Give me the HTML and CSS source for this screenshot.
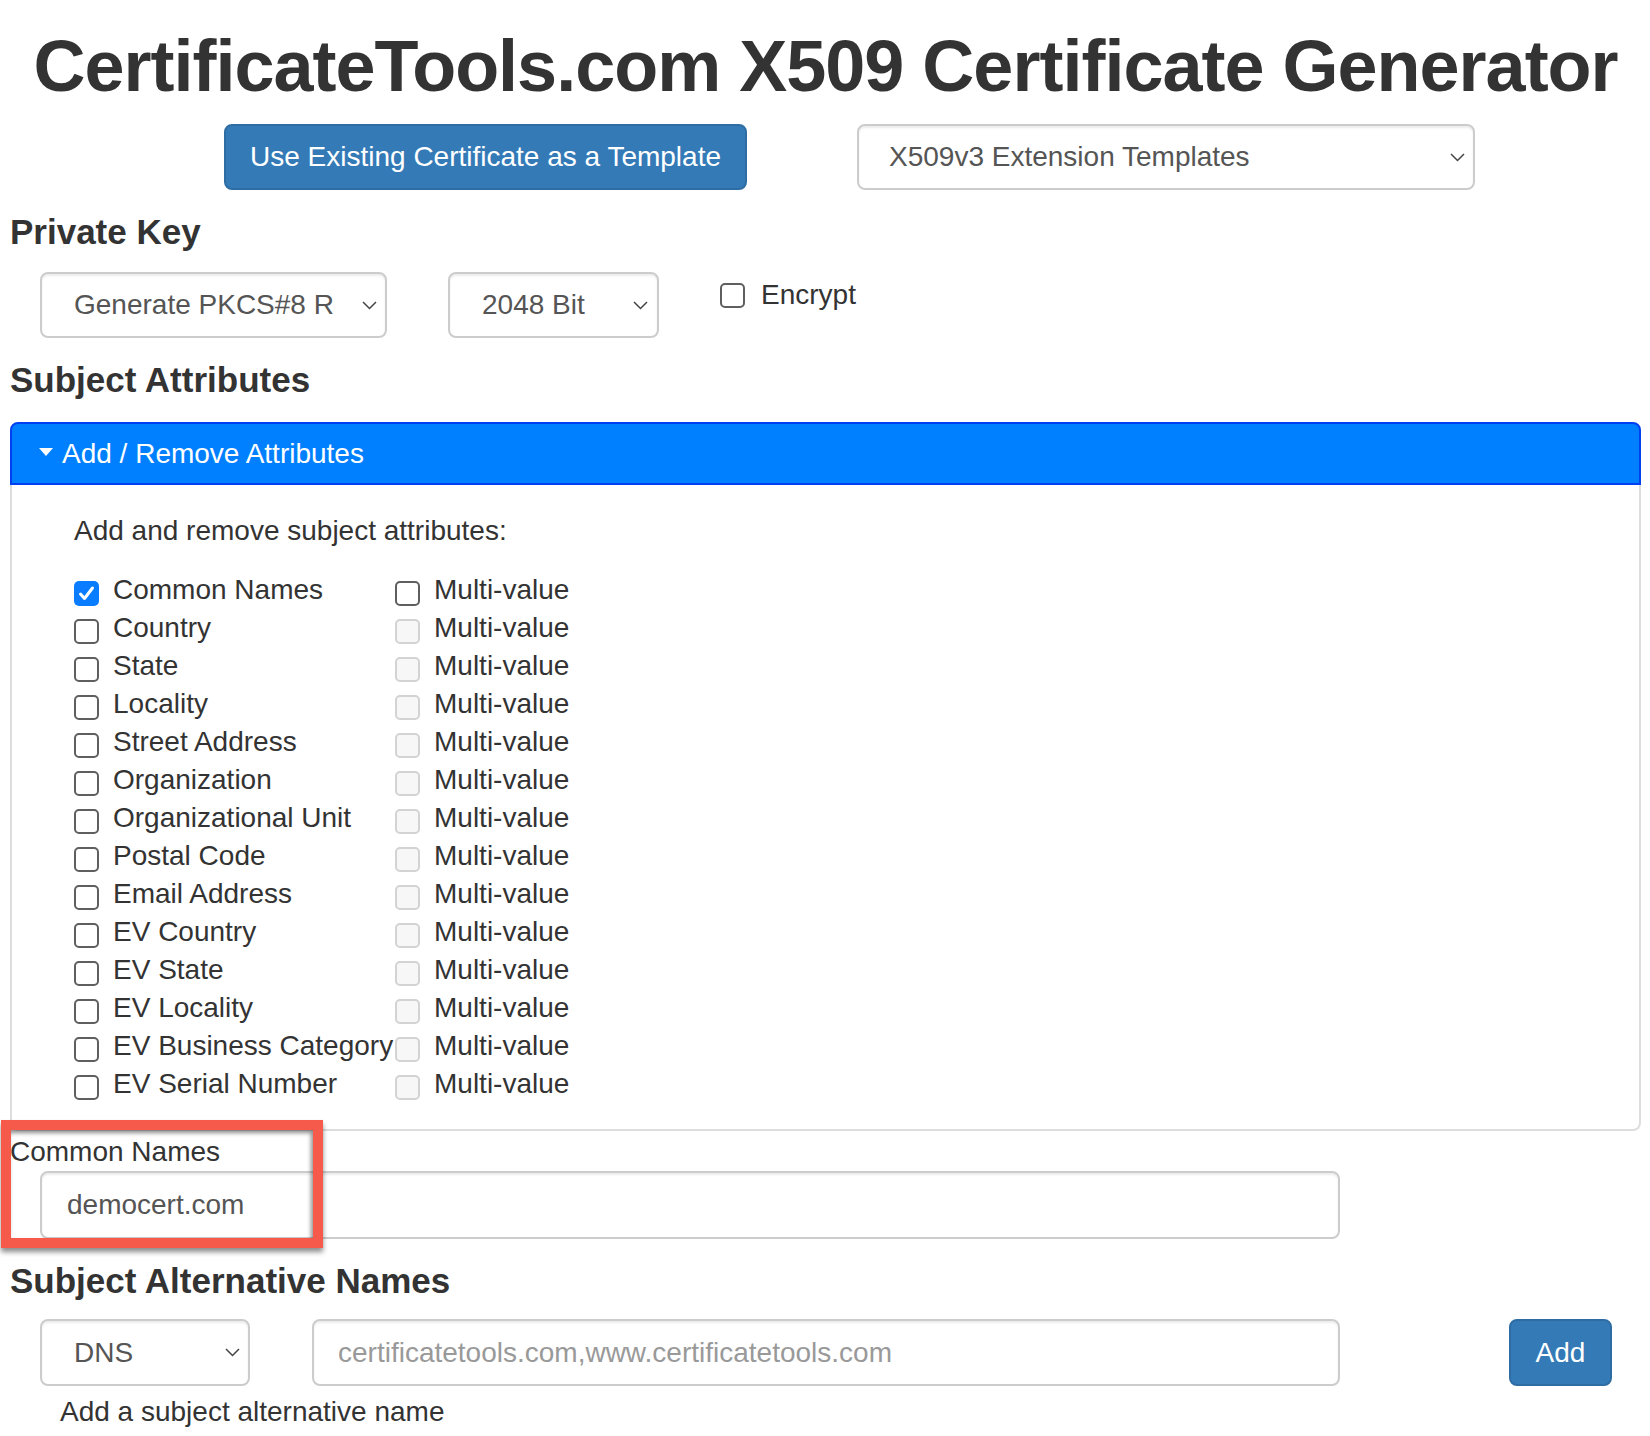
FILE: index.html
```html
<!DOCTYPE html>
<html lang="en">
<head>
<meta charset="utf-8">
<title>CertificateTools.com X509 Certificate Generator</title>
<link rel="stylesheet" href="styles.css">
</head>
<body>
<div class="page">
  <h1 class="title">CertificateTools.com X509 Certificate Generator</h1>

  <div class="toolbar">
    <button class="btn btn-template" type="button">Use Existing Certificate as a Template</button>
    <div class="select select-ext">
      <span>X509v3 Extension Templates</span>
      <svg class="chev" width="15" height="9" viewBox="0 0 15 9"><path d="M1 1l6.5 6.5L14 1" fill="none" stroke="#444" stroke-width="1.5"/></svg>
    </div>
  </div>

  <h3 class="section">Private Key</h3>
  <div class="key-row">
    <div class="select select-keytype">
      <span>Generate PKCS#8 R</span>
      <svg class="chev" width="15" height="9" viewBox="0 0 15 9"><path d="M1 1l6.5 6.5L14 1" fill="none" stroke="#444" stroke-width="1.5"/></svg>
    </div>
    <div class="select select-bits">
      <span>2048 Bit</span>
      <svg class="chev" width="15" height="9" viewBox="0 0 15 9"><path d="M1 1l6.5 6.5L14 1" fill="none" stroke="#444" stroke-width="1.5"/></svg>
    </div>
    <label class="encrypt"><span class="cb"></span><span>Encrypt</span></label>
  </div>

  <h3 class="section section-attr">Subject Attributes</h3>
  <div class="panel">
    <div class="panel-head"><span class="caret"></span><span>Add / Remove Attributes</span></div>
    <div class="panel-body">
      <p class="hint">Add and remove subject attributes:</p>
      <div class="attr-grid">
        <label class="attr"><span class="cb cb-on"><svg width="25" height="25" viewBox="0 0 25 25"><path d="M6.5 13l4 4.5L18.5 7" fill="none" stroke="#fff" stroke-width="3" stroke-linecap="round" stroke-linejoin="round"/></svg></span><span>Common Names</span></label>
        <label class="attr"><span class="cb"></span><span>Multi-value</span></label>
        <label class="attr"><span class="cb"></span><span>Country</span></label>
        <label class="attr"><span class="cb cb-off"></span><span>Multi-value</span></label>
        <label class="attr"><span class="cb"></span><span>State</span></label>
        <label class="attr"><span class="cb cb-off"></span><span>Multi-value</span></label>
        <label class="attr"><span class="cb"></span><span>Locality</span></label>
        <label class="attr"><span class="cb cb-off"></span><span>Multi-value</span></label>
        <label class="attr"><span class="cb"></span><span>Street Address</span></label>
        <label class="attr"><span class="cb cb-off"></span><span>Multi-value</span></label>
        <label class="attr"><span class="cb"></span><span>Organization</span></label>
        <label class="attr"><span class="cb cb-off"></span><span>Multi-value</span></label>
        <label class="attr"><span class="cb"></span><span>Organizational Unit</span></label>
        <label class="attr"><span class="cb cb-off"></span><span>Multi-value</span></label>
        <label class="attr"><span class="cb"></span><span>Postal Code</span></label>
        <label class="attr"><span class="cb cb-off"></span><span>Multi-value</span></label>
        <label class="attr"><span class="cb"></span><span>Email Address</span></label>
        <label class="attr"><span class="cb cb-off"></span><span>Multi-value</span></label>
        <label class="attr"><span class="cb"></span><span>EV Country</span></label>
        <label class="attr"><span class="cb cb-off"></span><span>Multi-value</span></label>
        <label class="attr"><span class="cb"></span><span>EV State</span></label>
        <label class="attr"><span class="cb cb-off"></span><span>Multi-value</span></label>
        <label class="attr"><span class="cb"></span><span>EV Locality</span></label>
        <label class="attr"><span class="cb cb-off"></span><span>Multi-value</span></label>
        <label class="attr"><span class="cb"></span><span>EV Business Category</span></label>
        <label class="attr"><span class="cb cb-off"></span><span>Multi-value</span></label>
        <label class="attr"><span class="cb"></span><span>EV Serial Number</span></label>
        <label class="attr"><span class="cb cb-off"></span><span>Multi-value</span></label>
      </div>
    </div>
  </div>

  <div class="cn-group">
    <div class="cn-label">Common Names</div>
    <input class="input input-cn" type="text" value="democert.com">
    <div class="highlight"></div>
  </div>

  <h3 class="section section-san">Subject Alternative Names</h3>
  <div class="san-row">
    <div class="select select-dns">
      <span>DNS</span>
      <svg class="chev" width="15" height="9" viewBox="0 0 15 9"><path d="M1 1l6.5 6.5L14 1" fill="none" stroke="#444" stroke-width="1.5"/></svg>
    </div>
    <input class="input input-san" type="text" placeholder="certificatetools.com,www.certificatetools.com">
    <button class="btn btn-add" type="button">Add</button>
  </div>
  <div class="help">Add a subject alternative name</div>
</div>
</body>
</html>
```
FILE: styles.css
```css
* {
  box-sizing: border-box;
}

body {
  margin: 0;
  background: #fff;
  color: #333;
  font-family: "Liberation Sans", Arial, Helvetica, sans-serif;
  font-size: 28px;
  line-height: 38px;
}

.page {
  padding: 0 9px 0 10px;
}

.title {
  margin: 26px 0 0;
  font-size: 72px;
  line-height: 80px;
  font-weight: bold;
  letter-spacing: -1px;
  text-align: center;
  color: #333;
}

.toolbar {
  display: flex;
  gap: 110px;
  margin-top: 18px;
  padding-left: 214px;
}

.btn {
  background: #337ab7;
  border: 2px solid #2e6da4;
  border-radius: 8px;
  color: #fff;
  font-family: inherit;
  font-size: 28px;
  padding: 0;
  cursor: pointer;
}

.btn-template {
  width: 523px;
  height: 66px;
}

.select {
  display: flex;
  align-items: center;
  justify-content: space-between;
  height: 66px;
  border: 2px solid #ccc;
  border-radius: 8px;
  background: #fff;
  color: #555;
  box-shadow: inset 0 2px 2px rgba(0, 0, 0, 0.075);
  white-space: nowrap;
}

.chev {
  flex: none;
}

.select-ext {
  width: 618px;
  padding: 0 8px 0 30px;
}

.section {
  margin: 22px 0 20px;
  font-size: 35px;
  line-height: 40px;
  font-weight: bold;
  color: #333;
}

.section-attr {
  margin-bottom: 22px;
}

.section-san {
  margin-bottom: 18px;
}

.key-row {
  display: flex;
  align-items: flex-start;
  padding-left: 30px;
  height: 66px;
}

.select-keytype {
  width: 347px;
  padding: 0 8px 0 32px;
}

.select-bits {
  width: 211px;
  margin-left: 61px;
  padding: 0 9px 0 32px;
}

.encrypt {
  display: flex;
  align-items: center;
  gap: 16px;
  margin: 4px 0 0 61px;
  height: 38px;
  color: #333;
}

.cb {
  flex: none;
  display: block;
  width: 25px;
  height: 25px;
  border: 2px solid #5f5f5f;
  border-radius: 5px;
  background: #fff;
}

.cb-on {
  border: none;
  background: #0a7cff;
}

.cb-on svg {
  display: block;
}

.cb-off {
  border-color: #d3d3d3;
  background: #f7f7f7;
}

.panel-head {
  display: flex;
  align-items: center;
  height: 63px;
  padding-left: 27px;
  background: #007fff;
  border: 2px solid #0040f0;
  border-radius: 8px 8px 0 0;
  color: #fff;
  line-height: 59px;
}

.caret {
  width: 0;
  height: 0;
  margin-right: 9px;
  margin-top: -3px;
  border-left: 7.5px solid transparent;
  border-right: 7.5px solid transparent;
  border-top: 8px solid #fff;
}

.panel-body {
  padding: 27px 0 26px 62px;
  border: 2px solid #ddd;
  border-top: none;
  border-radius: 0 0 8px 8px;
}

.hint {
  margin: 0 0 21px;
}

.attr-grid {
  display: grid;
  grid-template-columns: 321px 1fr;
}

.attr {
  display: flex;
  align-items: flex-start;
  height: 38px;
  white-space: nowrap;
}

.attr .cb {
  margin: 10px 14px 0 0;
}

.cn-group {
  position: relative;
  margin-top: 2px;
}

.cn-label {
  line-height: 38px;
  color: #333;
}

.input {
  display: block;
  height: 66px;
  border: 2px solid #ccc;
  border-radius: 8px;
  background: #fff;
  box-shadow: inset 0 2px 2px rgba(0, 0, 0, 0.075);
  font-family: inherit;
  font-size: 28px;
  color: #555;
  outline: none;
}

.input::placeholder {
  color: #999;
}

.input-cn {
  width: 1300px;
  height: 68px;
  margin: 0 0 0 30px;
  padding: 0 25px;
}

.highlight {
  position: absolute;
  left: -9px;
  top: -13px;
  width: 322px;
  height: 128px;
  border: 10px solid #f65a4b;
  box-shadow: 0 4px 5px rgba(0, 0, 0, 0.45), inset -2px 3px 4px rgba(0, 0, 0, 0.45);
  pointer-events: none;
}

.san-row {
  display: flex;
  align-items: flex-start;
  padding-left: 30px;
}

.select-dns {
  width: 210px;
  height: 67px;
  padding: 0 8px 0 32px;
}

.input-san {
  width: 1028px;
  height: 67px;
  margin-left: 62px;
  padding: 0 24px;
}

.btn-add {
  width: 103px;
  height: 67px;
  margin-left: 169px;
}

.help {
  margin-top: 7px;
  padding-left: 50px;
  color: #333;
}
```
